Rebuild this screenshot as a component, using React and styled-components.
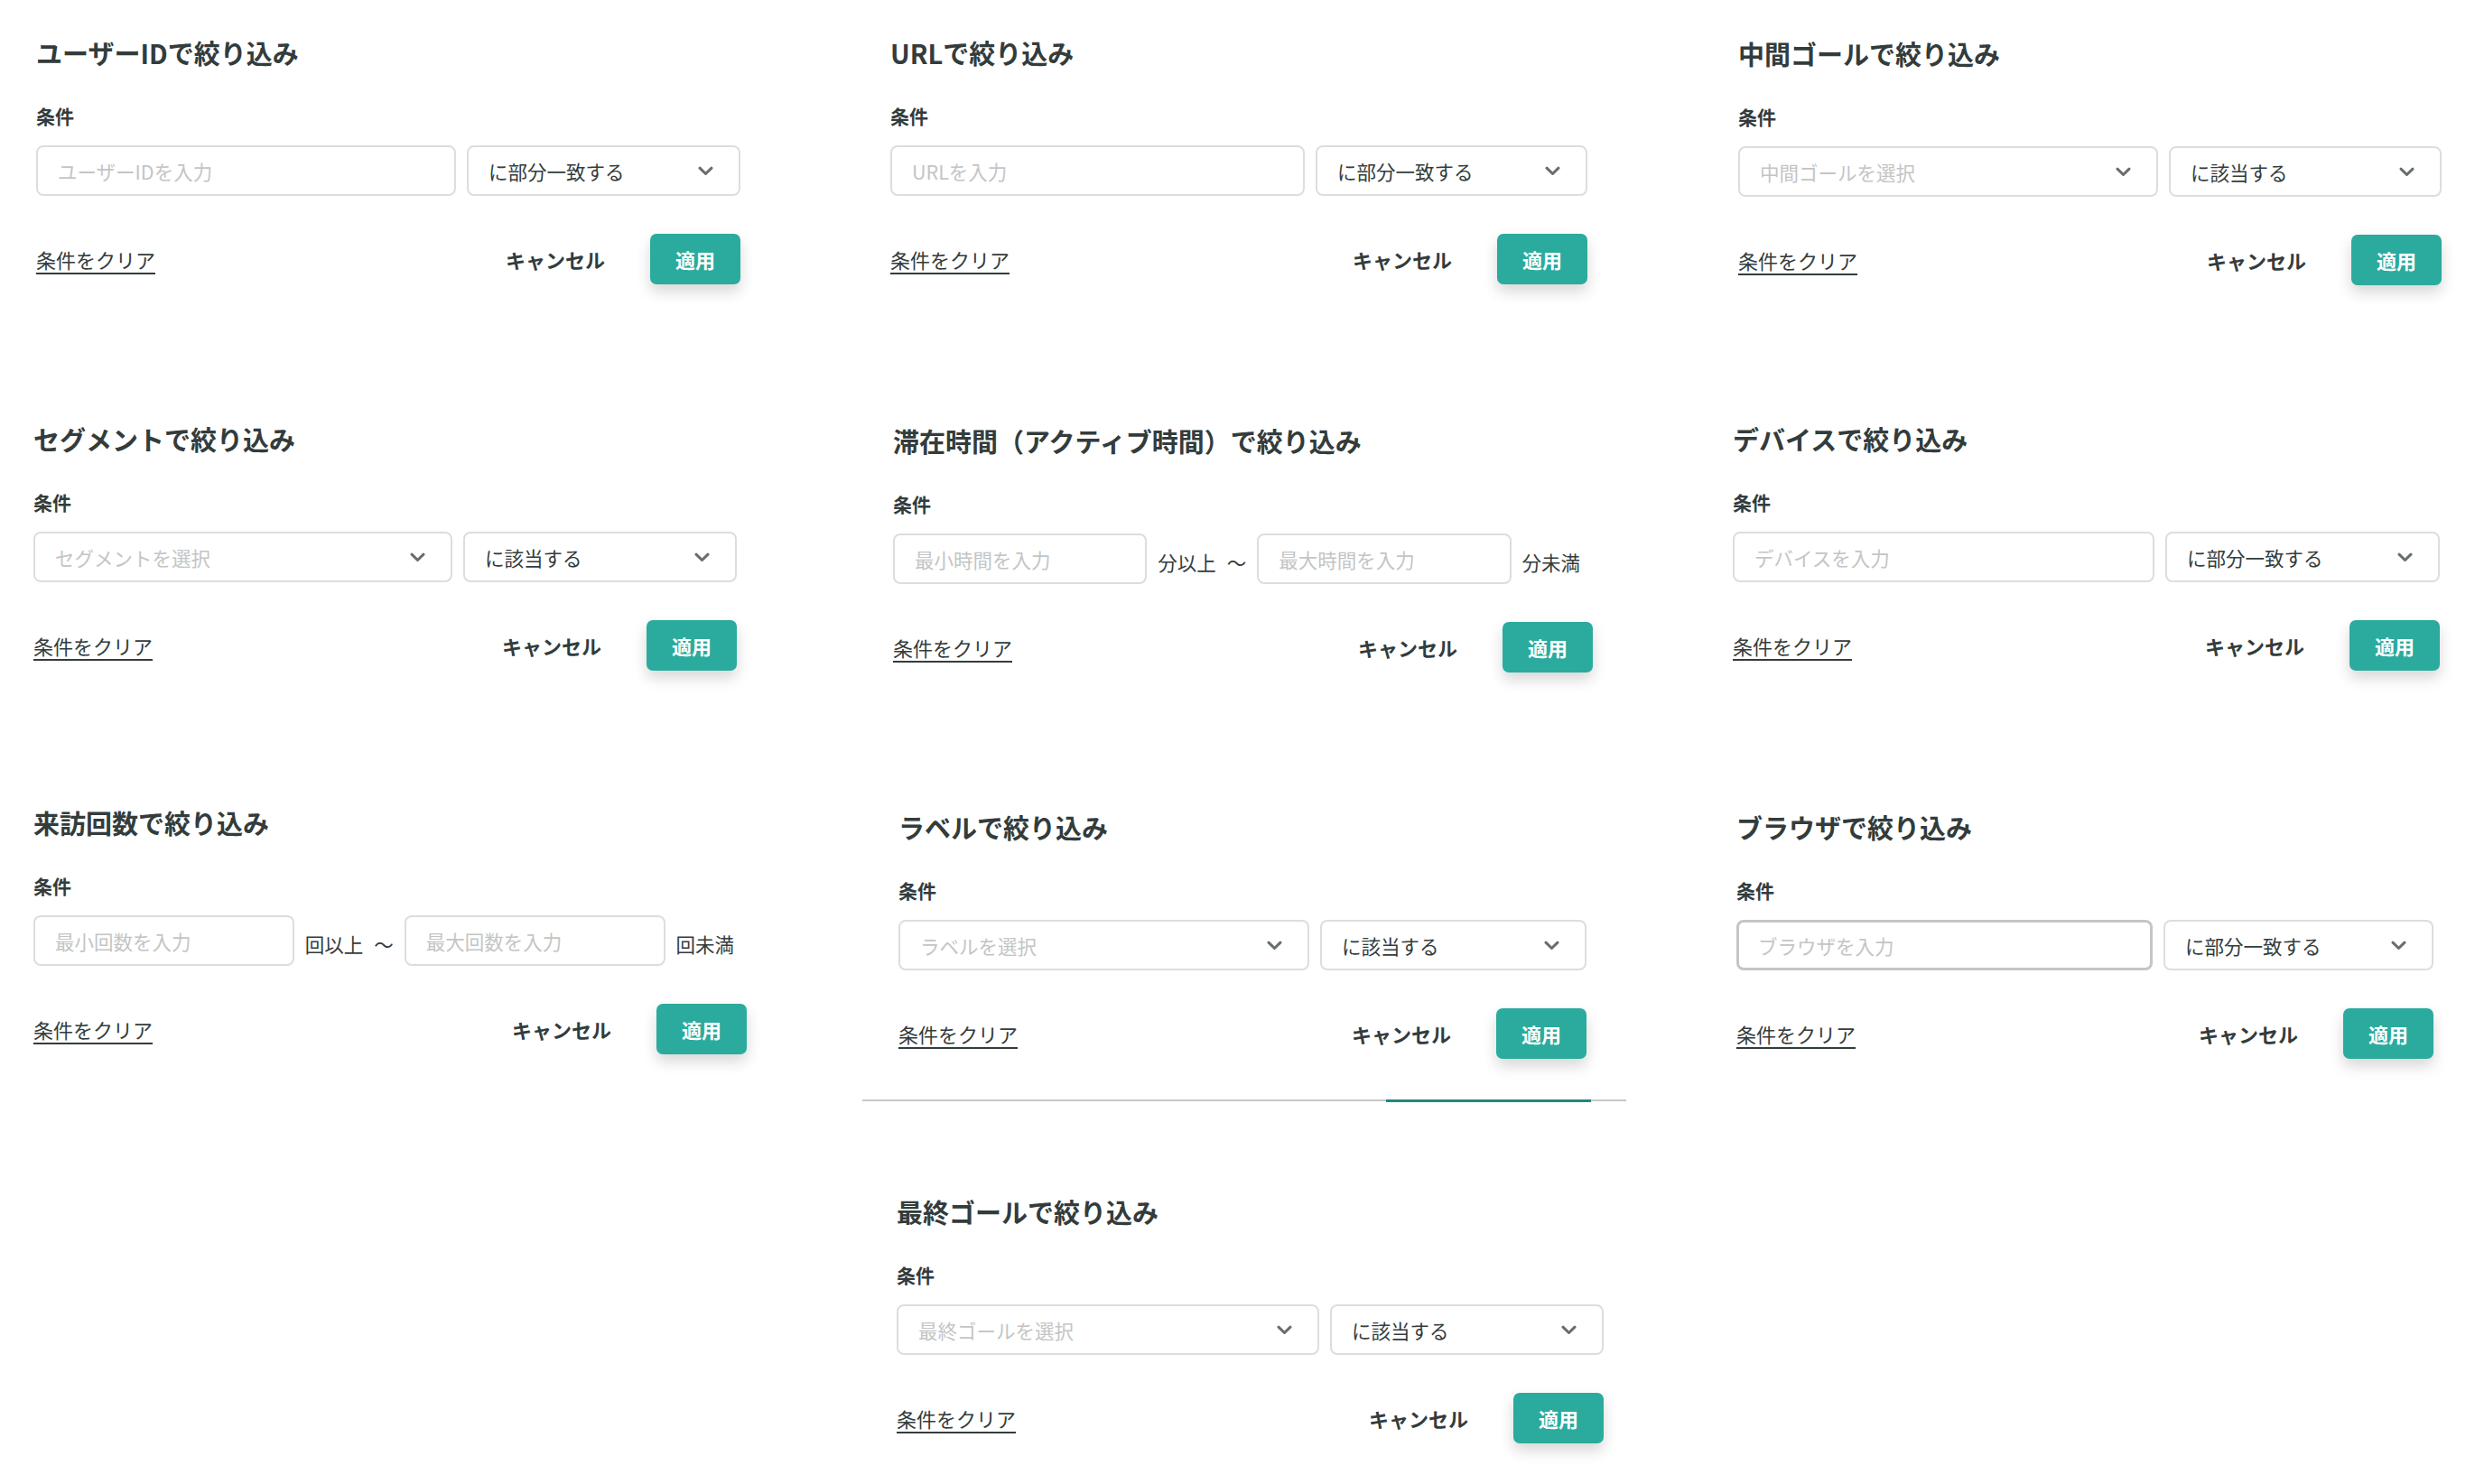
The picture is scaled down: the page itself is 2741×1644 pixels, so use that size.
import React from 'react';
import styled, { createGlobalStyle } from 'styled-components';

const GlobalStyle = createGlobalStyle`
  html, body {
    margin: 0;
    padding: 0;
    background: #ffffff;
  }
  body {
    font-family: "Noto Sans CJK JP", "Noto Sans", sans-serif;
    color: #333c3c;
  }
`;

const Page = styled.div`
  display: grid;
  grid-template-columns: 949px 933px 1fr;
  grid-auto-rows: 428px;
  padding-left: 37px;
  width: 2741px;
  height: 1644px;
  box-sizing: border-box;
  overflow: hidden;
`;

const Panel = styled.section`
  display: flex;
  flex-direction: column;
  width: ${p => p.$w}px;
  margin-left: ${p => p.$dx || 0}px;
  padding-top: ${p => 38 + (p.$dy || 0)}px;
  box-sizing: border-box;
`;

const Title = styled.h2`
  margin: 0;
  font-size: 29px;
  line-height: 40px;
  font-weight: 700;
  color: #333c3c;
  white-space: nowrap;
`;

const Label = styled.div`
  margin-top: 35px;
  font-size: 21px;
  line-height: 30px;
  font-weight: 700;
  color: #333c3c;
`;

const Row = styled.div`
  display: flex;
  align-items: center;
  gap: 12px;
  margin-top: 18px;
  height: 56px;
  padding-right: ${p => (p.$range ? 14 : 0)}px;
`;

const TextInput = styled.input`
  flex: 1 1 0;
  min-width: 0;
  height: 56px;
  box-sizing: border-box;
  border: ${p => (p.$focused ? '3px solid #c4c6c6' : '2px solid #dcdede')};
  border-radius: 8px;
  padding: 0 ${p => (p.$focused ? 21 : 22)}px;
  font-family: inherit;
  font-size: 21.5px;
  color: #333c3c;
  background: #fff;
  outline: none;

  &::placeholder {
    color: #c3c5c5;
  }
`;

const SelectBox = styled.div`
  flex: ${p => (p.$w ? `0 0 ${p.$w}px` : '1 1 0')};
  min-width: 0;
  height: 56px;
  box-sizing: border-box;
  border: 2px solid #dcdede;
  border-radius: 8px;
  padding: 0 28px 0 22px;
  display: flex;
  align-items: center;
  justify-content: space-between;
  font-size: 21.5px;
  background: #fff;

  span {
    color: ${p => (p.$placeholder ? '#c3c5c5' : '#333c3c')};
    white-space: nowrap;
  }
`;

const Unit = styled.span`
  flex: 0 0 auto;
  font-size: 21.5px;
  padding-top: 6px;
  color: #333c3c;
  white-space: nowrap;
`;

const Footer = styled.div`
  display: flex;
  align-items: center;
  justify-content: space-between;
  margin-top: 42px;
  height: 56px;
`;

const ClearLink = styled.a`
  font-size: 22px;
  color: #333c3c;
  text-decoration: underline;
  text-underline-offset: 5px;
  text-decoration-thickness: 2px;
  cursor: pointer;
`;

const Actions = styled.div`
  display: flex;
  align-items: center;
  gap: 50px;
`;

const CancelButton = styled.button`
  border: none;
  background: none;
  padding: 0;
  font-family: inherit;
  font-size: 22px;
  font-weight: 700;
  color: #333c3c;
  cursor: pointer;
`;

const ApplyButton = styled.button`
  width: 100px;
  height: 56px;
  border: none;
  border-radius: 7px;
  background: #2bab9d;
  color: #ffffff;
  font-family: inherit;
  font-size: 22px;
  font-weight: 700;
  box-shadow: 0 8px 16px rgba(0, 0, 0, 0.16);
  cursor: pointer;
`;

const CropEdge = styled.div`
  display: flex;
  height: 2px;
  margin: 45px -44px 0 -40px;
  background: #c6c8c8;
`;

const CropSliver = styled.div`
  width: 227px;
  height: 3px;
  margin-left: auto;
  margin-right: 39px;
  background: #1f8a7b;
`;

const Chevron = () => (
  <svg width="17" height="11" viewBox="0 0 17 11" fill="none">
    <path
      d="M2 2.2 L8.5 8.5 L15 2.2"
      stroke="#676d6d"
      strokeWidth="3"
      strokeLinecap="round"
      strokeLinejoin="round"
    />
  </svg>
);

const Select = ({ text, placeholder, width }) => (
  <SelectBox $placeholder={placeholder} $w={width}>
    <span>{text}</span>
    <Chevron />
  </SelectBox>
);

const FilterPanel = ({ f }) => {
  let row;
  if (f.kind === 'range') {
    row = (
      <Row $range>
        <TextInput placeholder={f.minText} />
        <Unit>{f.over}</Unit>
        <Unit>〜</Unit>
        <TextInput placeholder={f.maxText} />
        <Unit>{f.under}</Unit>
      </Row>
    );
  } else {
    row = (
      <Row>
        {f.kind === 'select' ? (
          <Select text={f.placeholder} placeholder />
        ) : (
          <TextInput placeholder={f.placeholder} $focused={f.focused} />
        )}
        <Select text={f.match} width={f.sw || 302} />
      </Row>
    );
  }
  return (
    <Panel $w={f.w} $dx={f.dx} $dy={f.dy} style={f.col ? { gridColumn: f.col } : undefined}>
      <Title>{f.title}</Title>
      <Label>条件</Label>
      {row}
      <Footer>
        <ClearLink>条件をクリア</ClearLink>
        <Actions>
          <CancelButton>キャンセル</CancelButton>
          <ApplyButton>適用</ApplyButton>
        </Actions>
      </Footer>
      {f.cut && (
        <CropEdge>
          <CropSliver />
        </CropEdge>
      )}
    </Panel>
  );
};

const filters = [
  { title: 'ユーザーIDで絞り込み', kind: 'input', placeholder: 'ユーザーIDを入力', match: 'に部分一致する', w: 780, dx: 3, sw: 303 },
  { title: 'URLで絞り込み', kind: 'input', placeholder: 'URLを入力', match: 'に部分一致する', w: 772, dx: 0, sw: 301 },
  { title: '中間ゴールで絞り込み', kind: 'select', placeholder: '中間ゴールを選択', match: 'に該当する', w: 779, dx: 6, dy: 1, sw: 302 },
  { title: 'セグメントで絞り込み', kind: 'select', placeholder: 'セグメントを選択', match: 'に該当する', w: 779, dx: 0, sw: 303 },
  { title: '滞在時間（アクティブ時間）で絞り込み', kind: 'range', minText: '最小時間を入力', maxText: '最大時間を入力', over: '分以上', under: '分未満', w: 775, dx: 3, dy: 2 },
  { title: 'デバイスで絞り込み', kind: 'input', placeholder: 'デバイスを入力', match: 'に部分一致する', w: 783, dx: 0, sw: 304 },
  { title: '来訪回数で絞り込み', kind: 'range', minText: '最小回数を入力', maxText: '最大回数を入力', over: '回以上', under: '回未満', w: 790, dx: 0, dy: -3 },
  { title: 'ラベルで絞り込み', kind: 'select', placeholder: 'ラベルを選択', match: 'に該当する', w: 762, dx: 9, dy: 2, sw: 295, cut: true },
  { title: 'ブラウザで絞り込み', kind: 'input', placeholder: 'ブラウザを入力', match: 'に部分一致する', w: 772, dx: 4, dy: 2, focused: true, sw: 299 },
  { title: '最終ゴールで絞り込み', kind: 'select', placeholder: '最終ゴールを選択', match: 'に該当する', w: 783, dx: 7, col: 2, sw: 303 },
];

export default function App() {
  return (
    <>
      <GlobalStyle />
      <Page>
        {filters.map(f => (
          <FilterPanel f={f} key={f.title} />
        ))}
      </Page>
    </>
  );
}
